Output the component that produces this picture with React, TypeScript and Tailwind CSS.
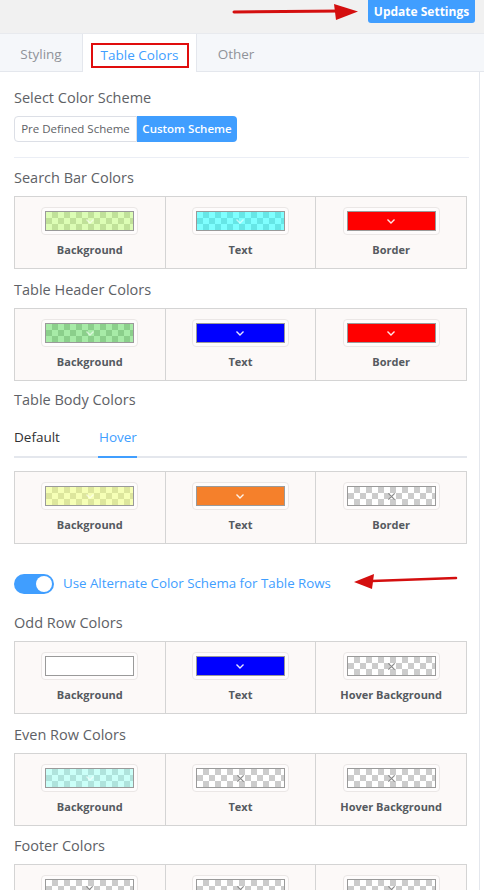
import React from "react";

type Sw = { label: string; color: string | null; solid?: boolean };

const Swatch = ({ s }: { s: Sw }) => {
  const transparent = s.color === null;
  return (
    <div className="flex flex-col items-center bg-[#fcf9f8] pt-[10px] pb-[11px]">
      <div className="w-[97px] h-[28px] p-[3px] border border-[#ebe7e6] rounded-[4px] bg-[#fefcfc]">
        <div className="relative w-full h-full border border-[#9a9a9a] overflow-hidden bg-[repeating-conic-gradient(#cccccc_0_25%,#ffffff_0_50%)] bg-[length:12px_12px]">
          {!transparent && (
            <div className="absolute inset-0" style={{ backgroundColor: s.color as string }} />
          )}
          <div className="absolute inset-0 flex items-center justify-center">
            {transparent ? (
              <svg width="9" height="9" viewBox="0 0 10 10">
                <path d="M1.5 1.5 L8.5 8.5 M8.5 1.5 L1.5 8.5" stroke="#8a8a8a" strokeWidth="1.3" />
              </svg>
            ) : (
              <svg width="10" height="7" viewBox="0 0 10 7">
                <path
                  d="M1.5 1.5 L5 5 L8.5 1.5"
                  stroke="#ffffff"
                  strokeOpacity={s.solid ? 0.9 : 0.6}
                  strokeWidth="1.4"
                  fill="none"
                />
              </svg>
            )}
          </div>
        </div>
      </div>
      <div className="mt-[8px] text-[11px] leading-[14px] font-bold text-[#555a60]">{s.label}</div>
    </div>
  );
};

const Grid = ({ items }: { items: Sw[] }) => (
  <div className="grid grid-cols-3 border border-[#d4d4d4] bg-[#d4d4d4] gap-[1px] w-[453px]">
    {items.map((s, i) => (
      <Swatch key={i} s={s} />
    ))}
  </div>
);

const Heading = ({ children }: { children: React.ReactNode }) => (
  <div className="text-[14.5px] leading-[20px] text-[#5e6166] font-medium">{children}</div>
);

export default function App() {
  return (
    <div
      className="relative w-[484px] min-h-[890px] bg-white"
      style={{ fontFamily: "'Open Sans', 'Noto Sans', sans-serif" }}
    >
      {/* top bar */}
      <div className="h-[33px] bg-[#f1f1f1] flex justify-end pr-[9px]">
        <button className="h-[23px] w-[107px] bg-[#409eff] rounded-b-[3px] text-white text-[12px] font-bold leading-[22px]">
          Update Settings
        </button>
      </div>
      {/* tabs */}
      <div className="h-[39px] bg-[#f5f7fa] border-t border-[#e8eaee] border-b border-b-[#e4e7ed] flex items-stretch">
        <div className="w-[82px] pt-[4px] flex items-center justify-center text-[13.5px] text-[#909399] font-medium">
          Styling
        </div>
        <div className="w-[115px] -mb-[1px] pt-[4px] bg-white border-x border-[#e4e7ed] flex items-center justify-center">
          <div className="border-2 border-[#e00d0d] w-[98px] h-[25px] flex items-center justify-center text-[13.5px] text-[#409eff] font-medium">
            Table Colors
          </div>
        </div>
        <div className="w-[78px] pt-[4px] flex items-center justify-center text-[13.5px] text-[#909399] font-medium">
          Other
        </div>
      </div>

      <div className="border-r border-[#e4e7ed] w-[480px] pl-[14px] pt-[16px] pb-[20px]">
        <Heading>Select Color Scheme</Heading>
        <div className="mt-[8px] flex h-[26px]">
          <div className="w-[123px] border border-[#dcdfe6] rounded-l-[4px] flex items-center justify-center text-[11.5px] text-[#606266]">
            Pre Defined Scheme
          </div>
          <div className="w-[100px] bg-[#409eff] rounded-r-[4px] flex items-center justify-center text-[11.5px] text-white font-semibold">
            Custom Scheme
          </div>
        </div>
        <div className="mt-[15px] h-[1px] w-[455px] bg-[#ebeef5]" />

        <div className="mt-[10px]">
          <Heading>Search Bar Colors</Heading>
        </div>
        <div className="mt-[8px]">
          <Grid
            items={[
              { label: "Background", color: "rgba(178,250,90,0.45)" },
              { label: "Text", color: "rgba(0,255,255,0.5)" },
              { label: "Border", color: "#ff0000", solid: true },
            ]}
          />
        </div>

        <div className="mt-[11px]">
          <Heading>Table Header Colors</Heading>
        </div>
        <div className="mt-[8px]">
          <Grid
            items={[
              { label: "Background", color: "rgba(60,210,60,0.45)" },
              { label: "Text", color: "#0000ff", solid: true },
              { label: "Border", color: "#ff0000", solid: true },
            ]}
          />
        </div>

        <div className="mt-[9px]">
          <Heading>Table Body Colors</Heading>
        </div>
        <div className="mt-[8px] w-[453px] h-[40px] border-b-2 border-[#e4e7ed] flex items-stretch">
          <div className="flex items-center text-[13.5px] text-[#303133] font-medium pr-[39px]">Default</div>
          <div className="relative flex items-center text-[13.5px] text-[#409eff] font-medium">
            Hover
            <div className="absolute left-[-1px] right-0 -bottom-[2px] h-[2px] bg-[#409eff]" />
          </div>
        </div>
        <div className="mt-[13px]">
          <Grid
            items={[
              { label: "Background", color: "rgba(238,255,110,0.5)" },
              { label: "Text", color: "#f5802b", solid: true },
              { label: "Border", color: null },
            ]}
          />
        </div>

        <div className="mt-[30px] flex items-center h-[20px]">
          <div className="relative w-[40px] h-[20px] rounded-full bg-[#409eff]">
            <div className="absolute right-[2px] top-[2px] w-[16px] h-[16px] rounded-full bg-white" />
          </div>
          <div className="ml-[9px] text-[13.3px] text-[#409eff] font-medium">
            Use Alternate Color Schema for Table Rows
          </div>
        </div>

        <div className="mt-[19px]">
          <Heading>Odd Row Colors</Heading>
        </div>
        <div className="mt-[8px]">
          <Grid
            items={[
              { label: "Background", color: "#ffffff", solid: true },
              { label: "Text", color: "#0000ff", solid: true },
              { label: "Hover Background", color: null },
            ]}
          />
        </div>

        <div className="mt-[11px]">
          <Heading>Even Row Colors</Heading>
        </div>
        <div className="mt-[8px]">
          <Grid
            items={[
              { label: "Background", color: "rgba(140,255,240,0.45)" },
              { label: "Text", color: null },
              { label: "Hover Background", color: null },
            ]}
          />
        </div>

        <div className="mt-[10px]">
          <Heading>Footer Colors</Heading>
        </div>
        <div className="mt-[8px]">
          <Grid
            items={[
              { label: "Background", color: null },
              { label: "Text", color: null },
              { label: "Border", color: null },
            ]}
          />
        </div>
      </div>

      {/* annotation arrows */}
      <svg className="absolute left-[230px] top-[2px]" width="132" height="20" viewBox="0 0 132 20">
        <path d="M4 10 L112 9" stroke="#d40f0f" strokeWidth="3" strokeLinecap="round" />
        <path d="M104 2 L128 9.5 L106 18 Z" fill="#d40f0f" />
      </svg>
      <svg className="absolute left-[350px] top-[572px]" width="110" height="20" viewBox="0 0 110 20">
        <path d="M22 9 L106 6" stroke="#d40f0f" strokeWidth="2.5" strokeLinecap="round" />
        <path d="M4 10 L24 2 L22 17 Z" fill="#d40f0f" />
      </svg>
    </div>
  );
}
